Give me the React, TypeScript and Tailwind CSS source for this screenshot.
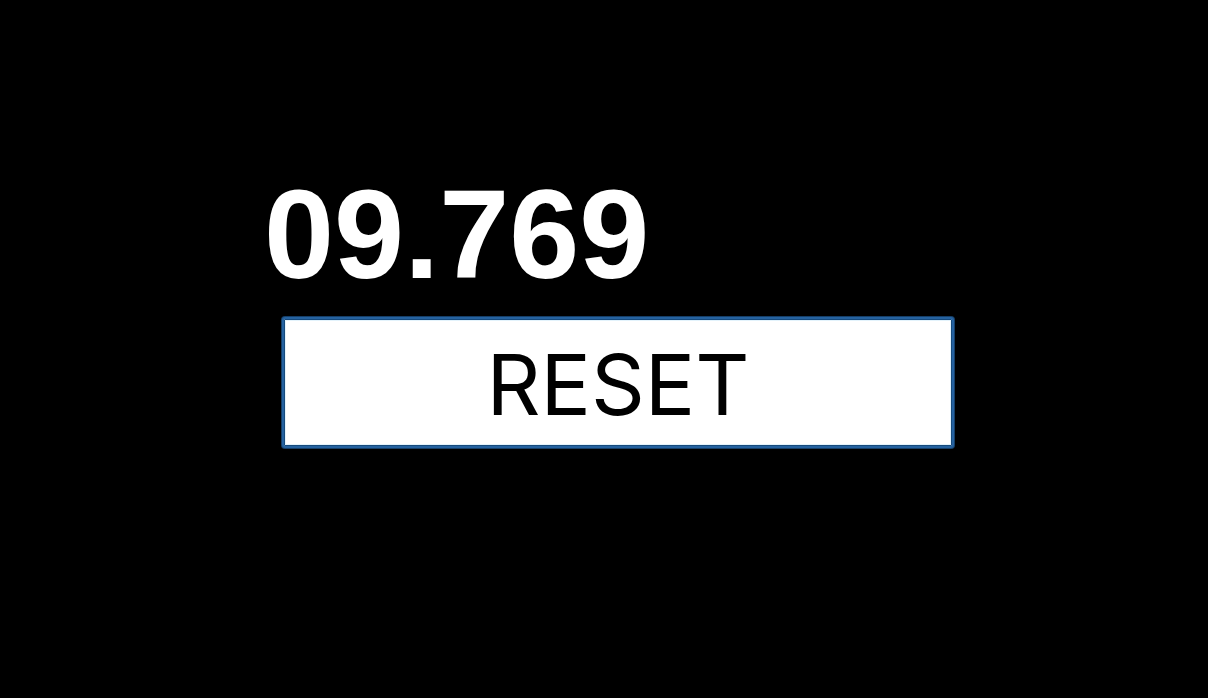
import { useEffect, useRef, useState } from "react";

function formatTime(ms: number) {
  const seconds = Math.floor(ms / 1000);
  return `${String(seconds).padStart(2, "0")}.${String(ms % 1000).padStart(3, "0")}`;
}

export default function App() {
  const [elapsed, setElapsed] = useState(9769);
  const resetRef = useRef<HTMLButtonElement>(null);

  useEffect(() => {
    resetRef.current?.focus();
  }, []);

  return (
    <main className="flex min-h-screen flex-col items-center justify-center bg-black pb-[95px] pl-7">
      <div className="w-3/5">
        <p className="mb-0.5 font-['Liberation_Sans',Arial,sans-serif] text-[126px] font-bold leading-[160px] text-white">
          {formatTime(elapsed)}
        </p>
        <div className="px-[18px]">
          <button
            ref={resetRef}
            type="button"
            onClick={() => setElapsed(0)}
            className="h-[131px] w-full rounded-[3px] border-2 border-transparent bg-white pt-1 font-[Inter,sans-serif] text-[84px] leading-none text-black outline-none focus:border-[#2562a0] focus:shadow-[inset_0_0_0_1px_#174a7c,inset_0_0_0_2px_#e3f3fc,0_0_0_1px_#163f68]"
          >
            RESET
          </button>
        </div>
      </div>
    </main>
  );
}
